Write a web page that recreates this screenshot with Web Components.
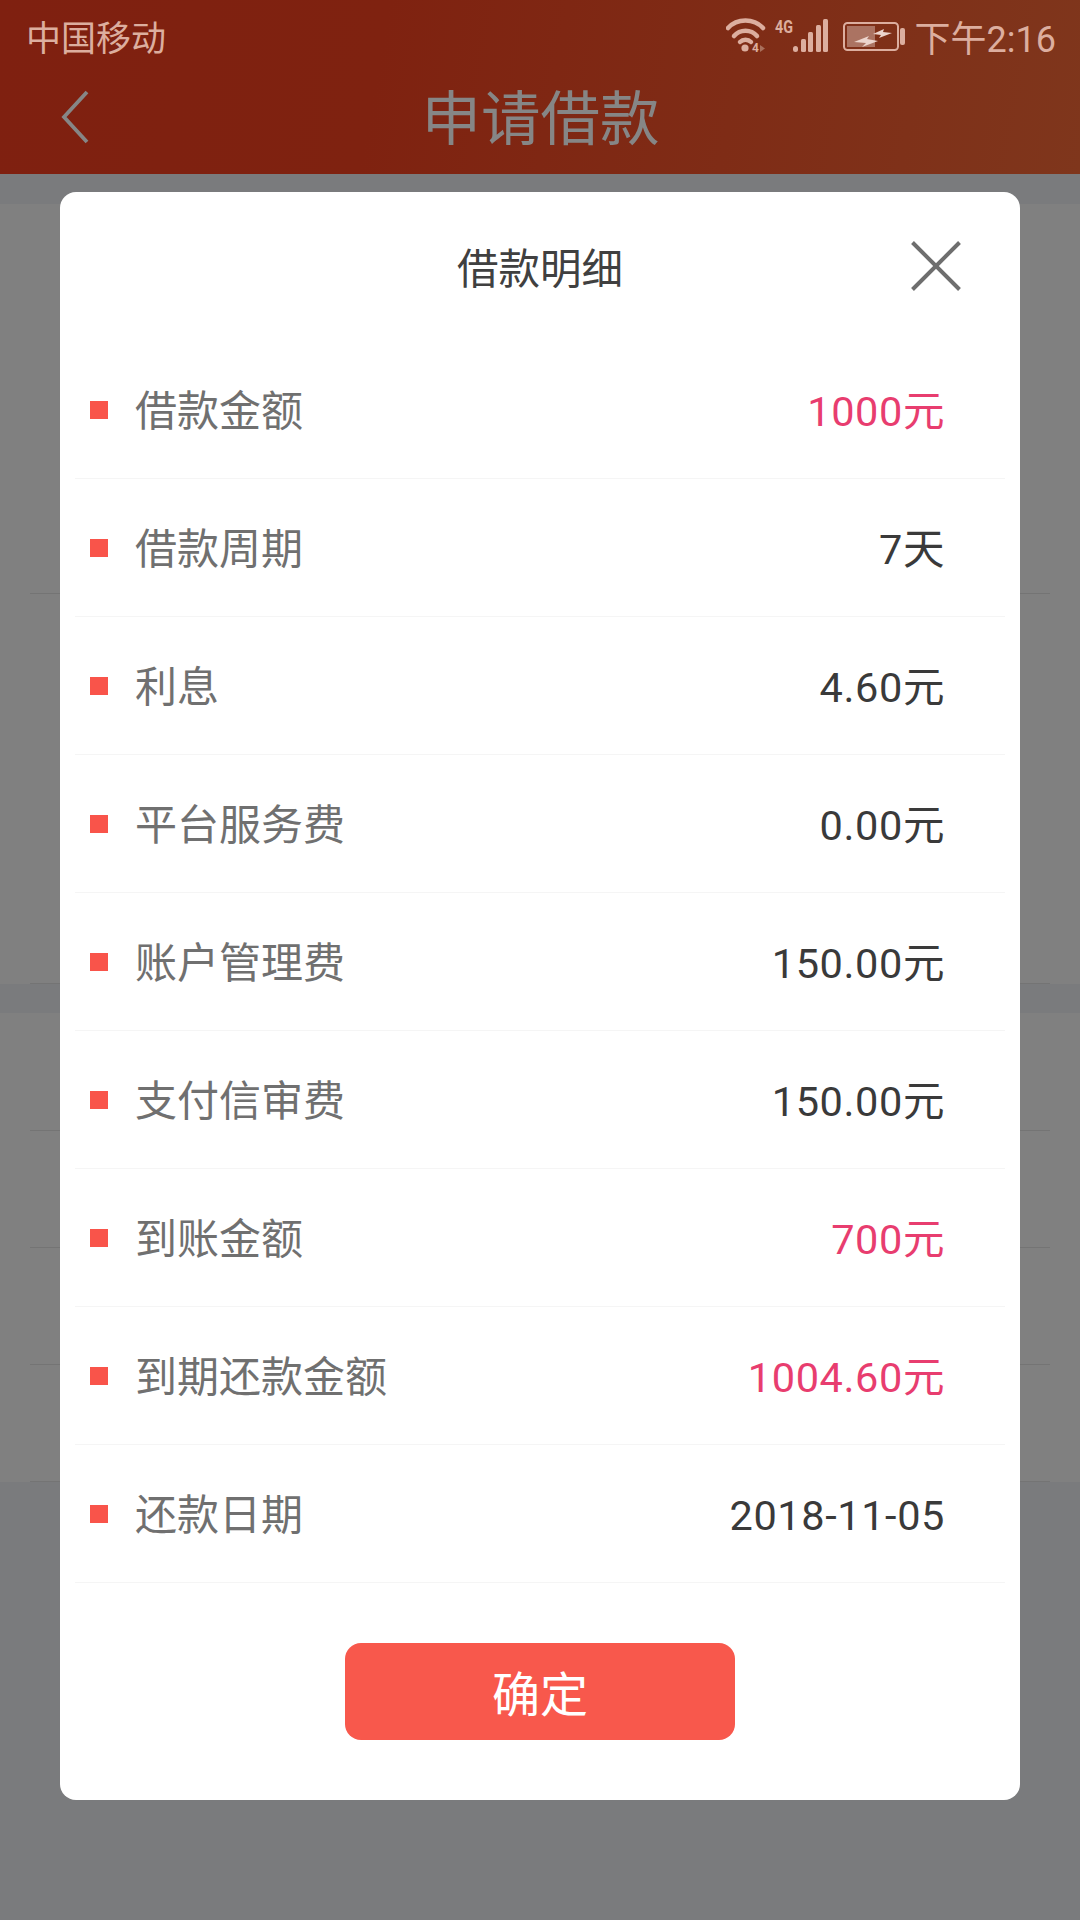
<!DOCTYPE html>
<html>
<head>
<meta charset="utf-8">
<title>申请借款</title>
<style>
  html, body { margin: 0; padding: 0; }
  body {
    width: 1080px;
    height: 1920px;
    overflow: hidden;
    font-family: Roboto, "Noto Sans CJK SC", sans-serif;
  }
</style>
</head>
<body>
<loan-screen>
  <loan-detail-row label="借款金额" value="1000元" accent></loan-detail-row>
  <loan-detail-row label="借款周期" value="7天"></loan-detail-row>
  <loan-detail-row label="利息" value="4.60元"></loan-detail-row>
  <loan-detail-row label="平台服务费" value="0.00元"></loan-detail-row>
  <loan-detail-row label="账户管理费" value="150.00元"></loan-detail-row>
  <loan-detail-row label="支付信审费" value="150.00元"></loan-detail-row>
  <loan-detail-row label="到账金额" value="700元" accent></loan-detail-row>
  <loan-detail-row label="到期还款金额" value="1004.60元" accent></loan-detail-row>
  <loan-detail-row label="还款日期" value="2018-11-05"></loan-detail-row>
</loan-screen>

<script>
// One row of the dialog: red square, label on the left, value on the right
class LoanDetailRow extends HTMLElement {
  constructor() {
    super();
    this.attachShadow({ mode: 'open' });
    this.shadowRoot.innerHTML = `
      <style>
        :host {
          display: flex;
          align-items: center;
          height: 137px;
          margin: 0 15px;
          padding: 0 60px 0 15px;
          border-bottom: 1px solid #f5f5f5;
          font-size: 41.5px;
        }
        .dot { width: 18px; height: 18px; background: #f9544a; margin-right: 27px; }
        .label { flex: 1; color: #707070; font-size: 42px; margin-bottom: 4px; }
        /* fixed line height, so a row with only digits sits like the others */
        .value { color: #3a3a3a; letter-spacing: .6px; line-height: 58px; margin-top: 4px; }
        :host([accent]) .value { color: #e83d6f; }
      </style>
      <span class="dot"></span>
      <span class="label"></span>
      <span class="value"></span>
    `;
  }

  connectedCallback() {
    this.shadowRoot.querySelector('.label').textContent = this.getAttribute('label');
    this.shadowRoot.querySelector('.value').textContent = this.getAttribute('value');
  }
}

// The white dialog, rows come in through the slot
class LoanDialog extends HTMLElement {
  constructor() {
    super();
    this.attachShadow({ mode: 'open' });
    this.shadowRoot.innerHTML = `
      <style>
        :host {
          display: block;
          position: absolute;
          left: 60px;
          top: 192px;
          width: 960px;
          height: 1608px;
          background: #fff;
          border-radius: 16px;
        }
        header {
          position: relative;
          display: flex;
          justify-content: center;
          align-items: center;
          height: 148px;
          padding-bottom: 2px;
          font-size: 41.5px;
          color: #404040;
        }
        header svg { position: absolute; left: 851px; top: 49px; }
        .rows { display: block; margin-top: -1px; }
        .foot { display: flex; justify-content: center; padding-top: 60px; }
        button {
          width: 390px;
          height: 97px;
          padding: 0 0 2px;
          border: 0;
          border-radius: 16px;
          background: #f8584c;
          color: #fff;
          font: inherit;
          font-size: 48px;
        }
      </style>
      <header>
        借款明细
        <svg width="50" height="50" viewBox="0 0 50 50">
          <path d="M1.5 1.5L48.5 48.5M48.5 1.5L1.5 48.5" stroke="#6e6e6e" stroke-width="4" fill="none"/>
        </svg>
      </header>
      <div class="rows"><slot></slot></div>
      <div class="foot"><button>确定</button></div>
    `;
  }
}

// Status bar and title bar on the red gradient
class LoanTopbar extends HTMLElement {
  constructor() {
    super();
    this.attachShadow({ mode: 'open' });
    this.shadowRoot.innerHTML = `
      <style>
        :host {
          display: block;
          height: 174px;
          background: linear-gradient(100deg, #7f2010 0%, #7f2210 35%, #7f361c 100%);
        }
        .status {
          display: flex;
          align-items: center;
          height: 74px;
          padding: 0 24px 0 26px;
          color: #dcae9f;
          font-size: 35px;
        }
        .carrier { flex: 1; margin-bottom: 3px; }
        .status svg { display: block; flex: none; }
        .time { margin-left: 9px; font-size: 36px; margin-bottom: 2px; }
        .title {
          position: relative;
          display: flex;
          justify-content: center;
          align-items: center;
          height: 92px;
          padding-bottom: 12px;
          box-sizing: border-box;
          font-size: 59.5px;
          color: #868686;
          margin-left: 1px;
        }
        .title svg { position: absolute; left: 60px; top: 16px; }
      </style>
      <div class="status">
        <span class="carrier">中国移动</span>
        <svg width="180" height="44" viewBox="0 0 180 44">
          <g fill="none" stroke="#dcae9f" stroke-width="4.5" stroke-linecap="round">
            <path d="M2 13C11 3 28 3 37 13"/>
            <path d="M8 21C14 14 25 14 31 21"/>
            <path d="M14 27C17 24 22 24 25 27"/>
          </g>
          <circle cx="19" cy="33" r="3.6" fill="#dcae9f"/>
          <text x="26" y="37" font-size="12" font-weight="700" fill="#dcae9f" font-family="Roboto">4</text>
          <path d="M34 30l5 3.5-5 3.5z" fill="#a9705c"/>
          <text x="49" y="18" font-size="18" font-weight="700" fill="#dcae9f" font-family="'Liberation Sans Narrow',Roboto" textLength="18" lengthAdjust="spacingAndGlyphs">4G</text>
          <g fill="#dcae9f">
            <rect x="67" y="31" width="5" height="6" rx="2.5"/>
            <rect x="75" y="24" width="5" height="13" rx="1.5"/>
            <rect x="82" y="17" width="5" height="20" rx="1.5"/>
            <rect x="90" y="10" width="5" height="27" rx="1.5"/>
            <rect x="97" y="4" width="5" height="33" rx="1.5"/>
          </g>
          <rect x="118" y="8" width="54" height="27" rx="3.5" fill="none" stroke="#dcae9f" stroke-width="2"/>
          <rect x="121" y="11" width="28" height="21" fill="#ab7362"/>
          <path d="M128 27L143 21L141 24L152 26L136 32L140 28Z" fill="#ecd4cc"/>
          <path d="M147 19L158 14L157 17L166 18L153 23L155 20Z" fill="#ecd4cc"/>
          <rect x="174" y="13" width="5" height="17" rx="2" fill="#dcae9f"/>
        </svg>
        <span class="time">下午2:16</span>
      </div>
      <div class="title">
        <svg width="30" height="54" viewBox="0 0 30 54">
          <path d="M26 2L3 27L26 52" fill="none" stroke="#868686" stroke-width="3.8"/>
        </svg>
        申请借款
      </div>
    `;
  }
}

// The page behind the dialog, dimmed by the overlay colours
class LoanScreen extends HTMLElement {
  constructor() {
    super();
    this.attachShadow({ mode: 'open' });
    this.shadowRoot.innerHTML = `
      <style>
        :host {
          display: block;
          position: relative;
          width: 1080px;
          height: 1920px;
          background: #7a7b7d;
        }
        .card { background: #808080; }
        .cell { margin: 0 30px; border-bottom: 1px solid #747474; }
        .one { margin-top: 30px; }
        .one .cell { height: 389px; }
        .two { margin-top: 29px; padding-top: 1px; }
        .two .cell { height: 116px; }
      </style>
      <loan-topbar></loan-topbar>
      <div class="card one">
        <div class="cell"></div>
        <div class="cell"></div>
      </div>
      <div class="card two">
        <div class="cell"></div>
        <div class="cell"></div>
        <div class="cell"></div>
        <div class="cell"></div>
      </div>
      <loan-dialog><slot></slot></loan-dialog>
    `;
  }
}

customElements.define('loan-detail-row', LoanDetailRow);
customElements.define('loan-dialog', LoanDialog);
customElements.define('loan-topbar', LoanTopbar);
customElements.define('loan-screen', LoanScreen);
</script>
</body>
</html>
